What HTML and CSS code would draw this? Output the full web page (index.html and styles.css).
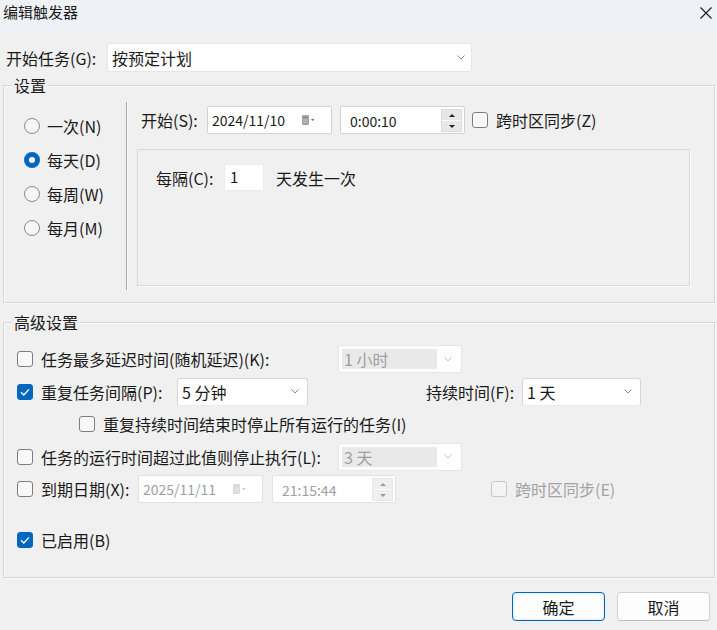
FILE: index.html
```html
<!doctype html>
<html>
<head>
    <meta charset="utf-8">
    <title>编辑触发器</title>
    <link rel="stylesheet" href="styles.css">
</head>
<body>
<div class="titlebar">
    <span class="title">编辑触发器</span>
    <svg class="close" width="12" height="12" viewBox="0 0 12 12"><path d="M0.5 0.5L11.5 11.5M11.5 0.5L0.5 11.5" stroke="#1a1a1a" stroke-width="1.1" fill="none"/></svg>
</div>
<div class="main">
    <div class="start-row">
        <span class="lbl-start">开始任务(G):</span>
        <div class="combo combo-task">
            <span>按预定计划</span>
            <svg class="chev" width="8" height="5" viewBox="0 0 8 5"><polyline points="0.5,0.5 4,4 7.5,0.5" fill="none" stroke="#8a8a8a" stroke-width="1"/></svg>
        </div>
    </div>

    <div class="group group-settings">
        <div class="group-title">设置</div>
        <div class="settings">
            <div class="freq">
                <div class="radio-row"><span class="radio"></span><span>一次(N)</span></div>
                <div class="radio-row"><span class="radio on"></span><span>每天(D)</span></div>
                <div class="radio-row"><span class="radio"></span><span>每周(W)</span></div>
                <div class="radio-row"><span class="radio"></span><span>每月(M)</span></div>
            </div>
            <div class="vsep"></div>
            <div class="sched">
                <div class="date-row">
                    <span class="lbl-begin">开始(S):</span>
                    <div class="field date">
                        <span>2024/11/10</span>
                        <svg class="cal" width="13" height="10" viewBox="0 0 13 10"><rect x="0" y="0" width="7" height="10" rx="1.2" fill="#a3a3a3"/><path d="M1 2.5H6" stroke="#8a8a8a" stroke-width="1"/><path d="M1.2 5H5.8M1.2 7.2H5.8" stroke="#cfcfcf" stroke-width="0.8"/><polygon points="9,4 12.5,4 10.75,6" fill="#6f6f6f"/></svg>
                    </div>
                    <div class="field time">
                        <span>0:00:10</span>
                        <div class="spin"><span class="up"></span><span class="down"></span></div>
                    </div>
                    <span class="check"></span>
                    <span class="check-text">跨时区同步(Z)</span>
                </div>
                <div class="panel">
                    <div class="every-row">
                        <span class="lbl-every">每隔(C):</span>
                        <div class="num">1</div>
                        <span class="every-text">天发生一次</span>
                    </div>
                </div>
            </div>
        </div>
    </div>

    <div class="group group-adv">
        <div class="group-title">高级设置</div>
        <div class="adv">
            <div class="row">
                <span class="check"></span>
                <span class="row-lbl w-long">任务最多延迟时间(随机延迟)(K):</span>
                <div class="combo combo-off w-off"><span class="off-fill">1 小时</span><svg class="chev" width="8" height="5" viewBox="0 0 8 5"><polyline points="0.5,0.5 4,4 7.5,0.5" fill="none" stroke="#c4c4c4" stroke-width="1"/></svg></div>
            </div>
            <div class="row">
                <span class="check on"><svg width="16" height="16" viewBox="0 0 16 16"><polyline points="4,8.3 6.8,11 12,5.4" fill="none" stroke="#fff" stroke-width="1.3"/></svg></span>
                <span class="row-lbl w-repeat">重复任务间隔(P):</span>
                <div class="combo w-repeat-box"><span>5 分钟</span><svg class="chev" width="8" height="5" viewBox="0 0 8 5"><polyline points="0.5,0.5 4,4 7.5,0.5" fill="none" stroke="#8a8a8a" stroke-width="1"/></svg></div>
                <span class="lbl-dur">持续时间(F):</span>
                <div class="combo w-dur-box"><span>1 天</span><svg class="chev" width="8" height="5" viewBox="0 0 8 5"><polyline points="0.5,0.5 4,4 7.5,0.5" fill="none" stroke="#8a8a8a" stroke-width="1"/></svg></div>
            </div>
            <div class="row row-sub">
                <span class="check"></span>
                <span class="row-lbl">重复持续时间结束时停止所有运行的任务(I)</span>
            </div>
            <div class="row">
                <span class="check"></span>
                <span class="row-lbl w-long">任务的运行时间超过此值则停止执行(L):</span>
                <div class="combo combo-off w-off"><span class="off-fill">3 天</span><svg class="chev" width="8" height="5" viewBox="0 0 8 5"><polyline points="0.5,0.5 4,4 7.5,0.5" fill="none" stroke="#c4c4c4" stroke-width="1"/></svg></div>
            </div>
            <div class="row">
                <span class="check"></span>
                <span class="row-lbl w-expire">到期日期(X):</span>
                <div class="field date off">
                    <span>2025/11/11</span>
                    <svg class="cal" width="13" height="10" viewBox="0 0 13 10"><rect x="0" y="0" width="7" height="10" rx="1.2" fill="#dadada"/><path d="M1.2 5H5.8M1.2 7.2H5.8" stroke="#ededed" stroke-width="0.8"/><polygon points="9,4 12.5,4 10.75,6" fill="#c2c2c2"/></svg>
                </div>
                <div class="field time off">
                    <span>21:15:44</span>
                    <div class="spin"><span class="up"></span><span class="down"></span></div>
                </div>
                <span class="check off tz-off"></span>
                <span class="check-text off-text">跨时区同步(E)</span>
            </div>
            <div class="row row-enabled">
                <span class="check on"><svg width="16" height="16" viewBox="0 0 16 16"><polyline points="4,8.3 6.8,11 12,5.4" fill="none" stroke="#fff" stroke-width="1.3"/></svg></span>
                <span class="row-lbl">已启用(B)</span>
            </div>
        </div>
    </div>

    <div class="buttons">
        <button class="btn btn-default">确定</button>
        <button class="btn">取消</button>
    </div>
</div>
</body>
</html>
```

FILE: styles.css
```css
* { box-sizing: border-box; }

body {
    margin: 0;
    width: 717px;
    height: 630px;
    overflow: hidden;
    background: #f0f0f0;
    color: #1a1a1a;
    font: 16px/18px "Noto Sans CJK SC", sans-serif;
}

.titlebar {
    height: 32px;
    display: flex;
    align-items: flex-start;
    justify-content: space-between;
    padding: 3px 5px 0 3px;
    background: #eef2f7;
}

.title {
    font-size: 15px;
    line-height: 17px;
}

.close { margin-top: 4px; }

.main { padding: 0 2px 0 3px; }

/* top row */
.start-row {
    display: flex;
    align-items: center;
    height: 29px;
    margin-top: 11px;
}

.lbl-start {
    width: 104px;
    padding-left: 3px;
}

.combo {
    display: flex;
    align-items: center;
    justify-content: space-between;
    height: 28px;
    padding: 0 8px 0 4px;
    background: #fff;
    border: 1px solid #d6d6d6;
    border-bottom-color: #ececec;
    border-radius: 3px;
}

.combo .chev { flex: none; }

.combo-task {
    width: 365px;
    height: 29px;
    padding-right: 6px;
    border-color: #e6e6e6;
}

/* group boxes: title sits over the top border */
.group {
    width: 712px;
    margin-top: 13px;
    border: 1px solid #d7d7d7;
    box-shadow: inset 1px 1px 0 #fafafa, 1px 1px 0 #fafafa;
}

.group-title {
    width: max-content;
    margin: -9px 0 0 8px;
    padding: 0 2px;
    line-height: 16px;
    background: #f0f0f0;
}

.group-adv { margin-top: 19px; }

/* settings group */
.settings {
    display: flex;
    align-items: flex-start;
    padding: 0 0 12px 20px;
}

.freq {
    width: 102px;
    padding-top: 16px;
}

.radio-row {
    display: flex;
    align-items: center;
    height: 34px;
}

.radio {
    width: 16px;
    height: 16px;
    margin-right: 7px;
    border: 1px solid #8a8a8a;
    border-radius: 50%;
    background: #f6f6f6;
}

.radio.on {
    border: 5px solid #0067c0;
    background: #fff;
}

.vsep {
    width: 2px;
    height: 188px;
    margin-top: 9px;
    border-left: 1px solid #a8a8a8;
    border-right: 1px solid #fcfcfc;
}

.sched {
    margin: 13px 0 0 9px;
}

.date-row {
    display: flex;
    align-items: center;
    height: 28px;
}

.lbl-begin {
    width: 70px;
    padding-left: 4px;
}

.field {
    display: flex;
    align-items: center;
    width: 125px;
    height: 28px;
    background: #fff;
    border: 1px solid #d2d2d2;
    border-radius: 2px;
}

.field > span { font-size: 14px; }

.field.date { padding: 0 16px 0 4px; }

.field.date .cal { flex: none; margin-left: auto; }

.field.time {
    width: 125px;
    margin-left: 8px;
    padding: 1px 2px 0 9px;
}

.spin {
    display: flex;
    flex-direction: column;
    width: 21px;
    height: 23px;
    margin-left: auto;
    border: 1px solid #dcdcdc;
    background: #e7e7e7;
}

.spin span {
    flex: 1;
    display: flex;
    align-items: center;
    justify-content: center;
}

.spin .up { border-bottom: 1px solid #fafafa; }

.spin .up::after {
    content: "";
    border: 3px solid transparent;
    border-top: 0;
    border-bottom: 3px solid #222;
}

.spin .down::after {
    content: "";
    border: 3px solid transparent;
    border-bottom: 0;
    border-top: 3px solid #222;
}

.field.off { color: #a0a0a0; border-color: #e2e2e2; }

.field.off .spin { background: #efefef; border-color: #e6e6e6; }

.field.off .spin .up::after { border-bottom-color: #9a9a9a; }

.field.off .spin .down::after { border-top-color: #9a9a9a; }

.check {
    flex: none;
    display: inline-flex;
    width: 16px;
    height: 16px;
    border: 1px solid #7e7e7e;
    border-radius: 3px;
    background: #f8f8f8;
}

.date-row .check { margin-left: 7px; }

.check.on {
    border-color: #0067c0;
    background: #0067c0;
}

.check.on svg { margin: -1px; }

.check.off {
    border-color: #c9c9c9;
    background: #f4f4f4;
}

.check-text { margin-left: 8px; }

.off-text { color: #a3a3a3; }

.panel {
    width: 553px;
    height: 137px;
    margin-top: 15px;
    padding: 14px 0 0 18px;
    border: 1px solid #d9d9d9;
    box-shadow: 1px 1px 0 #fafafa;
}

.every-row {
    display: flex;
    align-items: center;
    height: 27px;
}

.lbl-every { width: 68px; }

.num {
    width: 40px;
    height: 27px;
    padding: 3px 0 0 5px;
    font-size: 15px;
    background: #fff;
    border: 1px solid #ececec;
}

.every-text { margin-left: 12px; }

/* advanced group */
.adv {
    display: flex;
    flex-direction: column;
    gap: 2.5px;
    padding: 14px 0 22px 13px;
}

.row {
    display: flex;
    align-items: center;
    height: 30px;
}

.row-lbl { margin-left: 8px; }

.w-long { width: 297px; }
.w-repeat { width: 136px; }
.w-expire { width: 97px; }

.w-off { width: 124px; }
.w-repeat-box { width: 131px; }
.w-dur-box { width: 119px; }

.combo-off {
    padding: 3px 9px 3px 3px;
    border-color: #e6e6e6;
    color: #a0a0a0;
}

.off-fill {
    display: flex;
    align-items: center;
    width: 95px;
    height: 100%;
    padding-left: 2px;
    background: #e9e9e9;
}

.lbl-dur {
    width: 96px;
    margin-left: 118px;
}

.row-sub { padding-left: 62px; }

.row .field.time { width: 124px; margin-left: 9px; }

.tz-off { margin-left: 95px; }

.row-enabled { margin-top: 18.5px; }

/* buttons */
.buttons {
    display: flex;
    justify-content: flex-end;
    gap: 12px;
    margin-top: 14px;
    padding-right: 5px;
}

.btn {
    width: 93px;
    height: 29px;
    padding: 0;
    font: inherit;
    color: #1a1a1a;
    background: #fdfdfd;
    border: 1px solid #d2d2d2;
    border-bottom-color: #bdbdbd;
    border-radius: 4px;
}

.btn-default {
    border: 1px solid #0067c0;
    box-shadow: inset 0 0 0 1px #e6f0fa;
}
```
